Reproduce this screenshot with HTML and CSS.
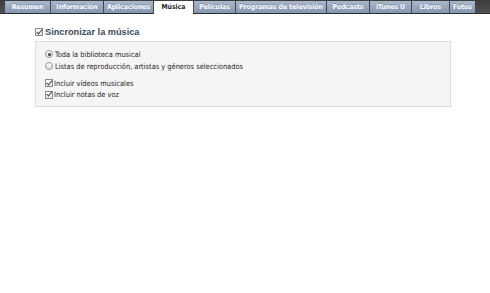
FILE: index.html
```html
<!DOCTYPE html>
<html>
<head>
<meta charset="utf-8">
<link rel="stylesheet" href="styles.css">
</head>
<body>
<div class="tabbar">
  <div class="tab" style="width:45px">Resumen</div>
  <div class="tab" style="width:52px">Información</div>
  <div class="tab" style="width:49px">Aplicaciones</div>
  <div class="tab active" style="width:39px">Música</div>
  <div class="tab" style="width:41px">Películas</div>
  <div class="tab" style="width:90px">Programas de televisión</div>
  <div class="tab" style="width:42px">Podcasts</div>
  <div class="tab" style="width:41px">iTunes U</div>
  <div class="tab" style="width:37px">Libros</div>
  <div class="tab" style="width:25px">Fotos</div>
</div>
<div class="content">
  <div class="title"><span class="cb"></span>Sincronizar la música</div>
  <div class="box">
    <div class="row"><span class="radio on"></span>Toda la biblioteca musical</div>
    <div class="row"><span class="radio"></span>Listas de reproducción, artistas y géneros seleccionados</div>
    <div class="row gap"><span class="cb small"></span>Incluir vídeos musicales</div>
    <div class="row short"><span class="cb small"></span>Incluir notas de voz</div>
  </div>
</div>
</body>
</html>
```
FILE: styles.css
```css
html, body { margin: 0; padding: 0; background: #fff; }
body { width: 490px; height: 293px; overflow: hidden; font-family: "DejaVu Sans Condensed", "DejaVu Sans", sans-serif; }
.tabbar {
  display: flex;
  height: 14px;
  background: linear-gradient(#3c3c3c, #505050);
  padding-left: 5px;
  gap: 1px;
  box-sizing: border-box;
  border-bottom: 1px solid #2e2e2e;
}
.tab {
  box-sizing: border-box;
  height: 12px;
  flex: none;
  background: linear-gradient(#a9b8cd, #8497b2);
  color: #fff;
  font-family: "DejaVu Sans Condensed", sans-serif;
  font-size: 6.8px;
  font-weight: bold;
  text-align: center;
  line-height: 12px;
  white-space: nowrap;
  overflow: hidden;
  margin-top: 1px;
  text-shadow: 0 -1px 0 rgba(0,0,0,0.2);
}
.tab.active {
  background: #fff;
  color: #222;
  height: 14px;
  line-height: 12px;
  text-shadow: none;
}
.content { padding: 12px 0 0 35px; }
.title {
  display: flex;
  align-items: center;
  font-family: "Liberation Sans", sans-serif;
  font-weight: bold;
  font-size: 9.2px;
  color: #3d4b5c;
  height: 12px;
}
.cb {
  width: 6px; height: 6px;
  border: 1px solid #8a8a8a;
  background: linear-gradient(#fff, #e4e4e4);
  margin-right: 2px;
  position: relative;
  flex: none;
}
.cb::after {
  content: "";
  position: absolute;
  left: 1.5px; top: -1.5px;
  width: 1.5px; height: 5px;
  border: solid #33475f;
  border-width: 0 1.5px 1.5px 0;
  transform: rotate(40deg);
}
.box {
  margin-top: 3px;
  width: 416px;
  height: 66px;
  box-sizing: border-box;
  background: #f5f5f5;
  border: 1px solid #dcdcdc;
  padding: 6px 0 0 9px;
}
.row {
  display: flex;
  align-items: center;
  font-size: 7.4px;
  color: #222;
  height: 12px;
}
.row.gap { margin-top: 5px; }
.row.short { height: 11px; }
.radio {
  width: 6px; height: 6px;
  border-radius: 50%;
  border: 1px solid #9a9a9a;
  background: linear-gradient(#fff, #ddd);
  margin-right: 2px;
  position: relative;
  flex: none;
}
.radio.on::after {
  content: "";
  position: absolute;
  left: 1.5px; top: 1.5px;
  width: 3px; height: 3px;
  border-radius: 50%;
  background: #444;
}
.cb.small { margin-right: 1px; }
```
